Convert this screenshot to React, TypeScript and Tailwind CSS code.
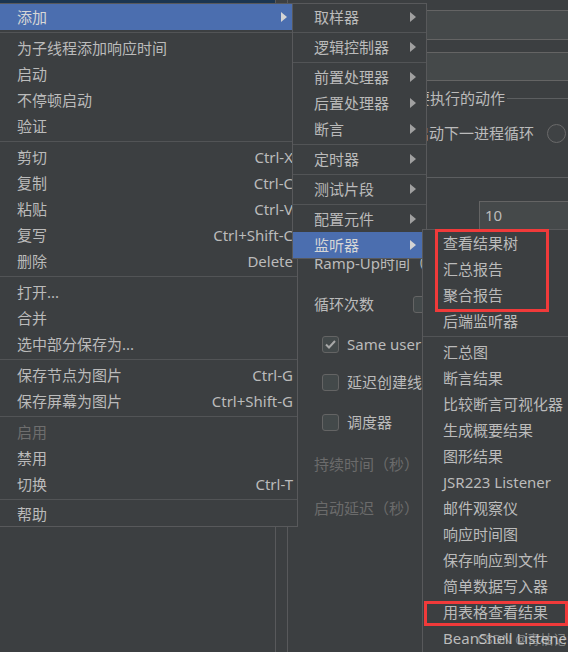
import React from "react";
import clsx from "clsx";

type Row = {
  label: string;
  shortcut?: string;
  arrow?: boolean;
  active?: boolean;
  disabled?: boolean;
  h?: string;
};
type Entry = Row | "sep";

const MAIN: Entry[] = [
  { label: "添加", arrow: true, active: true },
  "sep",
  { label: "为子线程添加响应时间" },
  { label: "启动" },
  { label: "不停顿启动" },
  { label: "验证" },
  "sep",
  { label: "剪切", shortcut: "Ctrl-X" },
  { label: "复制", shortcut: "Ctrl-C" },
  { label: "粘贴", shortcut: "Ctrl-V" },
  { label: "复写", shortcut: "Ctrl+Shift-C" },
  { label: "删除", shortcut: "Delete" },
  "sep",
  { label: "打开..." },
  { label: "合并" },
  { label: "选中部分保存为..." },
  "sep",
  { label: "保存节点为图片", shortcut: "Ctrl-G" },
  { label: "保存屏幕为图片", shortcut: "Ctrl+Shift-G" },
  "sep",
  { label: "启用", disabled: true },
  { label: "禁用" },
  { label: "切换", shortcut: "Ctrl-T" },
  "sep",
  { label: "帮助", h: "h-[24px]" },
];

const ADD: Entry[] = [
  { label: "取样器", arrow: true },
  "sep",
  { label: "逻辑控制器", arrow: true },
  "sep",
  { label: "前置处理器", arrow: true },
  { label: "后置处理器", arrow: true },
  { label: "断言", arrow: true },
  "sep",
  { label: "定时器", arrow: true },
  "sep",
  { label: "测试片段", arrow: true },
  "sep",
  { label: "配置元件", arrow: true },
  { label: "监听器", arrow: true, active: true },
];

const LISTENERS: Entry[] = [
  { label: "查看结果树" },
  { label: "汇总报告" },
  { label: "聚合报告" },
  { label: "后端监听器" },
  "sep",
  { label: "汇总图" },
  { label: "断言结果" },
  { label: "比较断言可视化器" },
  { label: "生成概要结果" },
  { label: "图形结果" },
  { label: "JSR223 Listener" },
  { label: "邮件观察仪" },
  { label: "响应时间图" },
  { label: "保存响应到文件" },
  { label: "简单数据写入器" },
  { label: "用表格查看结果" },
  { label: "BeanShell Listener" },
];

function Tri({ light }: { light?: boolean }) {
  return (
    <svg width="6" height="10" viewBox="0 0 6 10" className={light ? "fill-[#d4d4d4]" : "fill-[#a0a0a0]"}>
      <path d="M0 0L6 5L0 10Z" />
    </svg>
  );
}

function Check({ checked }: { checked?: boolean }) {
  return (
    <span className="w-[17px] h-[17px] shrink-0 rounded-[3px] border border-[#646464] bg-[#43494a] flex items-center justify-center">
      {checked && (
        <svg width="11" height="9" viewBox="0 0 11 9">
          <path d="M1 4.5L4 7.5L10 1" fill="none" stroke="#a8a8a8" strokeWidth="2" />
        </svg>
      )}
    </span>
  );
}

function Radio({ className }: { className?: string }) {
  return (
    <span className={clsx("block w-[19px] h-[19px] shrink-0 rounded-full border border-[#6a6a6a] bg-[#3f4244]", className)} />
  );
}

function Field({ children }: { children?: React.ReactNode }) {
  return (
    <div className="flex-1 h-full border border-[#646464] bg-[#45494a] pl-[5px] flex items-center">{children}</div>
  );
}

function TitledLine({ title }: { title: string }) {
  return (
    <div className="h-[16px] -ml-[14px] flex items-center">
      <div className="w-[8px] h-px bg-[#5c5e60]" />
      <span className="px-[2px] whitespace-nowrap">{title}</span>
      <div className="flex-1 h-px bg-[#5c5e60]" />
    </div>
  );
}

// one popup menu; sepH is the separator block height
function Menu({ items, className, sepH, rowCls }: { items: Entry[]; className: string; sepH: string; rowCls: string }) {
  return (
    <div className={clsx("absolute border border-[#58595b] bg-[#3c3f41] flex flex-col", className)}>
      {items.map((it, i) =>
        it === "sep" ? (
          <div key={i} className={clsx("flex items-center", sepH)}>
            <div className="h-px w-full bg-[#525456]" />
          </div>
        ) : (
          <div
            key={i}
            className={clsx(
              "flex items-center justify-between whitespace-nowrap",
              rowCls,
              it.h ?? "h-[26px]",
              it.active && "bg-[#4b6eaf] text-[#d6d6d6]",
              it.disabled && "text-[#6e6e6e]"
            )}
          >
            <span>{it.label}</span>
            {it.shortcut && <span>{it.shortcut}</span>}
            {it.arrow && <Tri light={it.active} />}
          </div>
        )
      )}
    </div>
  );
}

export default function App() {
  return (
    <div className="relative w-[568px] h-[652px] overflow-hidden bg-[#3c3f41] text-[15px] text-[#bbbbbb] font-['Noto_Sans','Noto_Sans_CJK_SC',sans-serif]">
      {/* underlying thread group window */}
      <div className="flex w-[700px] h-full">
        <div className="w-[276px] h-full border-r border-[#58595b] flex flex-col">
          <div className="h-[3px] bg-[#1b3550]" />
        </div>
        <div className="w-[12px] h-full border-r border-[#58595b]" />
        <div className="flex-1 flex flex-col pl-[26px] pt-[10px]">
          <div className="h-[30px] flex items-center">
            <span className="w-[60px]">名称：</span>
            <Field>线程组</Field>
          </div>
          <div className="mt-[12px] h-[29px] flex items-center">
            <span className="w-[60px]">注释：</span>
            <Field />
          </div>
          <div className="mt-[9px]">
            <TitledLine title="在取样器错误后要执行的动作" />
          </div>
          <div className="mt-[14px] h-[26px] flex items-center whitespace-nowrap">
            <Radio />
            <span className="ml-[5px]">继续</span>
            <Radio className="ml-[25px]" />
            <span className="ml-[2px]">启动下一进程循环</span>
            <Radio className="ml-[13px]" />
            <span className="ml-[6px]">停止线程</span>
          </div>
          <div className="mt-[23px]">
            <TitledLine title="线程属性" />
          </div>
          <div className="mt-[16px] h-[29px] flex items-center">
            <span className="w-[165px]">线程数：</span>
            <Field>10</Field>
          </div>
          <div className="mt-[19px] h-[29px] flex items-center">
            <span className="w-[165px] whitespace-nowrap">Ramp-Up时间（秒）：</span>
            <Field>1</Field>
          </div>
          <div className="mt-[13px] h-[26px] flex items-center">
            <span className="w-[99px]">循环次数</span>
            <Check />
            <span className="ml-[6px]">永远</span>
          </div>
          <div className="mt-[14px] h-[26px] flex items-center pl-[8px] whitespace-nowrap">
            <Check checked />
            <span className="ml-[8px]">Same user on each iteration</span>
          </div>
          <div className="mt-[12px] h-[26px] flex items-center pl-[8px] whitespace-nowrap">
            <Check />
            <span className="ml-[8px]">延迟创建线程直到需要</span>
          </div>
          <div className="mt-[14px] h-[26px] flex items-center pl-[8px]">
            <Check />
            <span className="ml-[8px]">调度器</span>
          </div>
          <div className="mt-[16px] h-[26px] flex items-center text-[#6b6b6b]">持续时间（秒）</div>
          <div className="mt-[18px] h-[26px] flex items-center text-[#6b6b6b]">启动延迟（秒）</div>
        </div>
      </div>

      <Menu items={MAIN} className="left-[-1px] top-[3px] w-[299px]" sepH="h-[5px]" rowCls="pl-[17px] pr-[4px] [&>svg]:mr-[6px]" />
      <Menu items={ADD} className="left-[292px] top-[3px] w-[135px]" sepH="h-[4px]" rowCls="pl-[21px] pr-[10px]" />
      <Menu items={LISTENERS} className="left-[422px] top-[229px] w-[170px] h-[440px]" sepH="h-[5px]" rowCls="pl-[20px] pr-[10px]" />

      {/* red annotation boxes */}
      <div className="absolute left-[435px] top-[229px] w-[114px] h-[83px] border-[3px] border-[#f03a3a]" />
      <div className="absolute left-[424px] top-[601px] w-[144px] h-[25px] border-[3px] border-[#f03a3a]" />

      <div className="absolute right-[2px] top-[630px] text-[13px] text-[#e0e0e0]/45 whitespace-nowrap">CSDN @青柚记</div>
    </div>
  );
}
